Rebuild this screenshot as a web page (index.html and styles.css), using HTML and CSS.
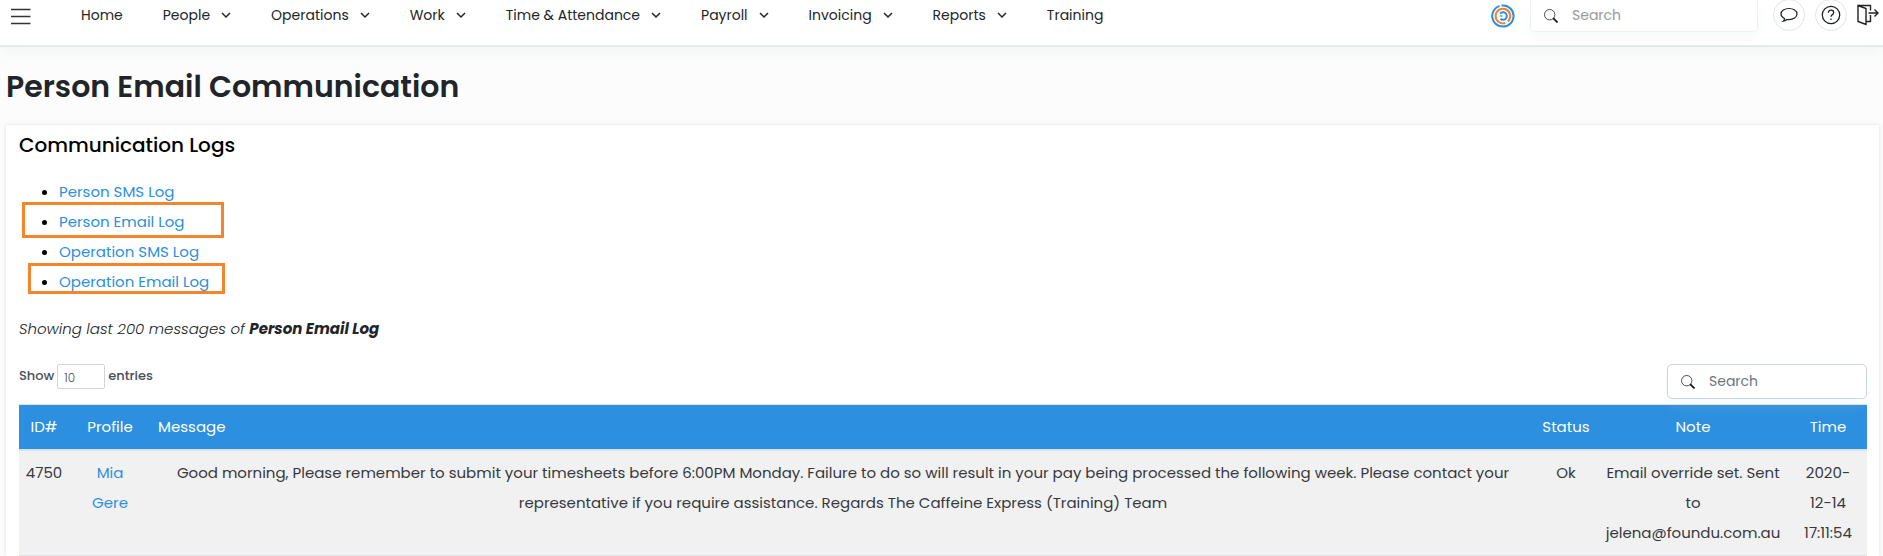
FILE: index.html
```
<!DOCTYPE html>
<html lang="en">
<head>
<meta charset="utf-8">
<title>Person Email Communication</title>
<link rel="stylesheet" href="styles.css">
</head>
<body>
<svg width="0" height="0" class="symbols" aria-hidden="true">
  <symbol id="chevron" viewBox="0 0 10 10"><path d="M1 3l4 4 4-4" fill="none" stroke="#212529" stroke-width="1.5"/></symbol>
  <symbol id="search" viewBox="0 0 14 14"><circle cx="5.7" cy="5.7" r="5.2" fill="none" stroke="#222" stroke-width=".8"/><path d="M9.2 9.2l4.3 4.3" stroke="#111" stroke-width="1.7"/></symbol>
</svg>
<header class="topbar">
  <button class="menu" type="button" aria-label="Menu">
    <svg width="20" height="17" viewBox="0 0 20 17"><path d="M0 1.5h19.500M0 8.500h19.500M0 15.500h19.500" stroke="#333" stroke-width="1.600"/></svg>
  </button>
  <nav class="nav">
    <a href="#">Home</a>
    <a href="#">People <svg class="chev"><use href="#chevron"/></svg></a>
    <a href="#">Operations <svg class="chev"><use href="#chevron"/></svg></a>
    <a href="#">Work <svg class="chev"><use href="#chevron"/></svg></a>
    <a href="#">Time &amp; Attendance <svg class="chev"><use href="#chevron"/></svg></a>
    <a href="#">Payroll <svg class="chev"><use href="#chevron"/></svg></a>
    <a href="#">Invoicing <svg class="chev"><use href="#chevron"/></svg></a>
    <a href="#">Reports <svg class="chev"><use href="#chevron"/></svg></a>
    <a href="#">Training</a>
  </nav>
  <div class="tools">
    <svg class="logo" width="24" height="24" viewBox="0 0 24 24" fill="none" stroke-width="2">
      <path d="M8.600 1.900A10.600 10.600 0 0 0 12 22.600 10.600 10.600 0 0 0 12 1.400L10.500 1.500" stroke="#2c8fe0"/>
      <path d="M16.800 17.500A7.300 7.300 0 1 0 14.200 19" stroke="#f5822a"/>
      <path d="M9 9.700A3.800 3.800 0 1 1 9.400 14.800" stroke="#2c8fe0"/>
      <path d="M8.600 12h3" stroke="#2c8fe0" stroke-width="1.200"/>
    </svg>
    <label class="search search-top">
      <svg class="lens"><use href="#search"/></svg>
      <input type="search" placeholder="Search" aria-label="Search">
    </label>
    <button class="round" type="button" aria-label="Messages">
      <svg width="18" height="16" viewBox="0 0 18 16" fill="none" stroke="#222" stroke-width="1.200"><path d="M4.500 11.500C2.300 10.500 1 8.900 1 7.100 1 3.900 4.600 1.500 9 1.500s8 2.400 8 5.600-3.600 5.600-8 5.600c-.9 0-1.500 0-2.200-.2-1 .9-2.200 1.500-3.600 1.700.8-.7 1.300-1.600 1.300-2.700z"/></svg>
    </button>
    <button class="round" type="button" aria-label="Help">
      <svg width="20" height="20" viewBox="0 0 20 20" fill="none" stroke="#222" stroke-width="1.300"><circle cx="10" cy="10" r="8.700"/><path d="M7.300 7.800c0-1.600 1.200-2.600 2.700-2.600s2.700 1 2.700 2.500c0 1.900-2.700 2-2.700 4.100"/><path d="M10 13.400v1.600"/></svg>
    </button>
    <button class="exit" type="button" aria-label="Log out">
      <svg width="22" height="22" viewBox="0 0 22 22" fill="none" stroke="#222" stroke-width="1.400"><path d="M1 1.500l8 3v16l-8-3zM1 1.500h12.500v5M9 17.500h4.500v-6.500M11.500 9h9M17.500 5.500l3.500 3.500-3.500 3.500"/></svg>
    </button>
  </div>
</header>
<main class="page">
  <h1>Person Email Communication</h1>
  <section class="card">
    <h2>Communication Logs</h2>
    <ul class="logs">
      <li><a href="#">Person SMS Log</a></li>
      <li class="mark mark-person"><a href="#">Person Email Log</a></li>
      <li><a href="#">Operation SMS Log</a></li>
      <li class="mark mark-operation"><a href="#">Operation Email Log</a></li>
    </ul>
    <p class="summary">Showing last 200 messages of <b>Person Email Log</b></p>
    <div class="controls">
      <div class="length">
        <label for="length">Show</label>
        <select id="length"><option>10</option><option>25</option><option>50</option></select>
        <span>entries</span>
      </div>
      <label class="search search-table">
        <svg class="lens"><use href="#search"/></svg>
        <input type="search" placeholder="Search" aria-label="Search messages">
      </label>
    </div>
    <table class="messages">
      <colgroup><col class="c-id"><col class="c-profile"><col><col class="c-status"><col class="c-note"><col class="c-time"></colgroup>
      <thead>
        <tr><th>ID#</th><th>Profile</th><th class="left">Message</th><th>Status</th><th>Note</th><th>Time</th></tr>
      </thead>
      <tbody>
        <tr>
          <td>4750</td>
          <td><a href="#">Mia<br>Gere</a></td>
          <td>Good morning, Please remember to submit your timesheets before 6:00PM Monday. Failure to do so will result in your pay being processed the following week. Please contact your<br>representative if you require assistance. Regards The Caffeine Express (Training) Team</td>
          <td>Ok</td>
          <td>Email override set. Sent<br>to<br>jelena@foundu.com.au</td>
          <td>2020-<br>12-14<br>17:11:54</td>
        </tr>
      </tbody>
    </table>
  </section>
</main>
</body>
</html>
```
FILE: styles.css
```
*, *::before, *::after { box-sizing: border-box; }
body {
  margin: 0;
  background: #fcfcfc;
  color: #212529;
  font: 400 15px/30px Poppins, Inter, "Open Sans", sans-serif;
}
a { color: #2c8fe0; text-decoration: none; }
button { padding: 0; border: 0; background: none; }
svg { display: block; flex: none; }
.symbols { position: absolute; }

.topbar {
  display: flex;
  height: 47px;
  padding: 0 4px 0 11px;
  background: #fff;
  border-bottom: 2px solid #e4ebea;
  box-shadow: 0 5px 20px rgba(200, 225, 220, .2);
}
.menu { height: 32px; width: 20px; }
.nav { display: flex; gap: 40px; margin-left: 50px; }
.nav a {
  display: flex;
  align-items: center;
  gap: 11px;
  height: 30px;
  color: #212529;
  font-size: 14px;
  white-space: nowrap;
}
.chev { width: 10px; height: 10px; }
.tools { display: flex; align-items: flex-start; margin-left: auto; }
.logo { margin: 4px 15px 0 0; }
.search {
  display: flex;
  align-items: center;
  background: #fff;
  border: 1px solid #ced4da;
  border-radius: 5px;
  padding-left: 12px;
}
.lens { width: 14px; height: 14px; }
.search input {
  flex: 1;
  min-width: 0;
  margin-left: 14px;
  padding: 0 0 2px;
  border: 0;
  outline: 0;
  background: none;
  font: inherit;
  font-size: 14px;
  line-height: 20px;
}
.search input::placeholder { color: #6c757d; opacity: 1; }
.search-top {
  width: 228px;
  height: 32px;
  margin-right: 15px;
  border-color: #eff1f1;
  border-top: 0;
  border-radius: 0 0 5px 5px;
  box-shadow: 0 8px 12px rgba(200, 225, 220, .14);
}
.search .lens { margin-left: 1px; }
.search-top input::placeholder { color: #999; }
.round {
  display: grid;
  place-items: center;
  width: 32px;
  height: 32px;
  margin: -1px 10px 0 0;
  border: 1px solid #dfe8e7;
  border-radius: 50%;
}
.exit { margin-top: 4px; }

.page { padding: 17px 4px 0 6px; }
h1 { margin: 0; font-size: 30px; font-weight: 600; line-height: 46px; }
h2 { margin: 0; color: #000; font-size: 20px; font-weight: 500; line-height: 40px; }
.card {
  margin-top: 15px;
  padding: 0 12px 0 13px;
  background: #fff;
  box-shadow: 0 0 4px rgba(0, 0, 0, .12);
}
.logs { margin: 12px 0 0; padding-left: 40px; color: #000; }
.mark { position: relative; }
.mark::after {
  content: "";
  position: absolute;
  border: 3px solid #f5852b;
  pointer-events: none;
}
.mark-person::after { left: -37px; top: -5px; width: 202px; height: 36px; }
.mark-operation::after { left: -31px; top: -4px; width: 197px; height: 31px; }
.summary { margin: 17px 0 0; font-style: italic; font-weight: 300; }
.summary b { font-weight: 700; }
.controls { display: flex; justify-content: space-between; align-items: flex-start; margin-top: 20px; }
.length {
  display: flex;
  gap: 3px;
  color: #495057;
  font-size: 13px;
  font-weight: 500;
  line-height: 24px;
}
.length select {
  appearance: none;
  width: 48px;
  height: 25px;
  padding: 1px 6px 0;
  border: 1px solid #ced4da;
  border-radius: 2px;
  background: #fff;
  color: #495057;
  font: inherit;
  font-size: 12px;
  font-weight: 300;
}
.search-table {
  position: relative;
  width: 200px;
  height: 35px;
  box-shadow: 0 8px 12px rgba(200, 225, 220, .14);
}
.messages {
  width: 100%;
  margin-top: 5px;
  table-layout: fixed;
  border-collapse: collapse;
  text-align: center;
}
.c-id { width: 50px; }
.c-profile { width: 82px; }
.c-status { width: 62px; }
.c-note { width: 192px; }
.c-time { width: 78px; }
.messages th {
  padding: 7px 0;
  background: #2c8fdf;
  border-top: 1px solid #dee2e6;
  border-bottom: 2px solid #dee2e6;
  color: #fff;
  font-weight: 400;
}
.messages th.left { padding-left: 7px; text-align: left; }
.messages td {
  padding: 7px 0;
  background: #f1f1f1;
  color: #36393d;
  border-bottom: 1px solid #dee2e6;
  vertical-align: top;
}
```
